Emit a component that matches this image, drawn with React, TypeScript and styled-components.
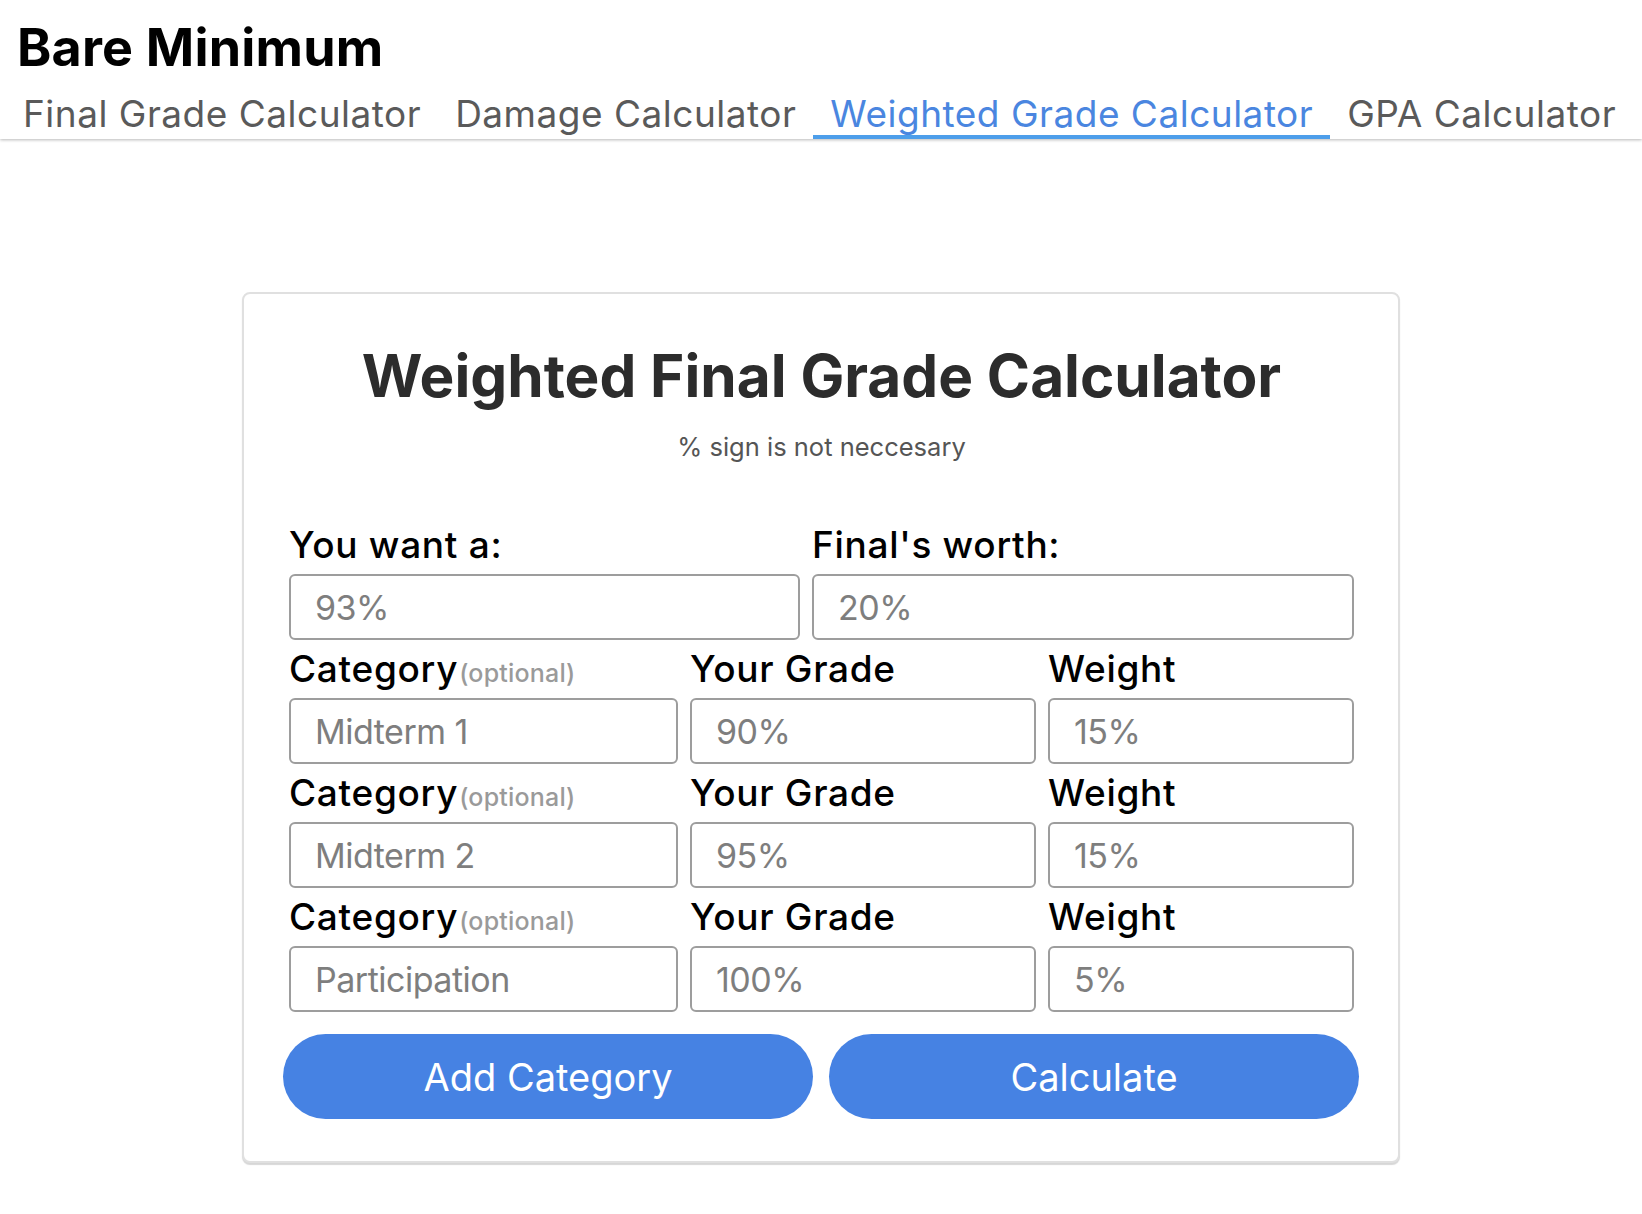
import React from "react";
import styled, { createGlobalStyle } from "styled-components";

const GlobalStyle = createGlobalStyle`
  html, body {
    margin: 0;
    padding: 0;
    background: #ffffff;
    font-family: Inter, "Noto Sans", "Liberation Sans", sans-serif;
  }
  * { box-sizing: border-box; }
`;

const Page = styled.div`
  width: 100%;
  min-height: 1214px;
  background: #fff;
`;

const Header = styled.header`
  padding-top: 17px;
  box-shadow: 0 1px 3px rgba(0, 0, 0, 0.28);
  position: relative;
  z-index: 1;
`;

const SiteTitle = styled.h1`
  margin: 0 0 15px 17px;
  font-size: 52px;
  line-height: 61px;
  font-weight: 700;
  letter-spacing: 0.2px;
  color: #000;
`;

const Tabs = styled.nav`
  display: flex;
  padding-left: 6px;
`;

const Tab = styled.a<{ $active?: boolean }>`
  display: block;
  padding: 0 17px;
  font-size: 37px;
  line-height: 42px;
  font-weight: 400;
  letter-spacing: 0.5px;
  text-decoration: none;
  color: ${(p) => (p.$active ? "#4a86e0" : "#5a5a5a")};
  border-bottom: 4px solid ${(p) => (p.$active ? "#4d9eea" : "transparent")};
  cursor: pointer;
`;

const Card = styled.main`
  width: 1158px;
  margin: 153px auto 0;
  padding: 47px 44px 42px 45px;
  border: 2px solid #e0e0e0;
  border-radius: 8px;
  box-shadow: 0 2px 1px rgba(0, 0, 0, 0.16);
  background: #fff;
`;

const CardTitle = styled.h2`
  margin: 0;
  text-align: center;
  font-size: 58.5px;
  line-height: 70px;
  font-weight: 700;
  letter-spacing: 0;
  color: #2c2c2c;
`;

const Subtitle = styled.p`
  margin: 20px 0 60px;
  text-align: center;
  font-size: 25.5px;
  line-height: 32px;
  color: #555;
`;

const Row = styled.div<{ $cols: string; $top: number }>`
  display: grid;
  grid-template-columns: ${(p) => p.$cols};
  column-gap: 12px;
  margin-top: ${(p) => p.$top}px;
`;

const Field = styled.div`
  display: flex;
  flex-direction: column;
  min-width: 0;
`;

const Label = styled.label`
  display: block;
  height: 44px;
  font-size: 37px;
  line-height: 44px;
  font-weight: 500;
  letter-spacing: 0.7px;
  color: #000;
  white-space: nowrap;
`;

const Optional = styled.span`
  margin-left: 1px;
  font-size: 25px;
  line-height: 0;
  font-weight: 500;
  letter-spacing: 0.2px;
  color: #9a9a9a;
`;

const Input = styled.input`
  display: block;
  width: 100%;
  height: 66px;
  margin-top: 7px;
  padding: 0 20px 0 24px;
  border: 2px solid #9d9d9d;
  border-radius: 6px;
  background: #fff;
  font-family: inherit;
  font-size: 34px;
  letter-spacing: -0.5px;
  color: #222;
  outline: none;
  &::placeholder {
    color: #7e7e7e;
    opacity: 1;
  }
`;

const ButtonRow = styled.div`
  display: grid;
  grid-template-columns: 1fr 1fr;
  column-gap: 16px;
  margin: 22px -5px 0 -6px;
`;

const PillButton = styled.button`
  height: 85px;
  border: none;
  border-radius: 43px;
  background: #4682e3;
  color: #fff;
  font-family: inherit;
  font-size: 38px;
  font-weight: 400;
  cursor: pointer;
`;

const tabs = [
  "Final Grade Calculator",
  "Damage Calculator",
  "Weighted Grade Calculator",
  "GPA Calculator",
];

const categories = [
  { name: "Midterm 1", grade: "90%", weight: "15%" },
  { name: "Midterm 2", grade: "95%", weight: "15%" },
  { name: "Participation", grade: "100%", weight: "5%" },
];

export default function App() {
  return (
    <Page>
      <GlobalStyle />
      <Header>
        <SiteTitle>Bare Minimum</SiteTitle>
        <Tabs>
          {tabs.map((t) => (
            <Tab key={t} $active={t === "Weighted Grade Calculator"}>
              {t}
            </Tab>
          ))}
        </Tabs>
      </Header>
      <Card>
        <CardTitle>Weighted Final Grade Calculator</CardTitle>
        <Subtitle>% sign is not neccesary</Subtitle>
        <Row $cols="511px 1fr" $top={0}>
          <Field>
            <Label>You want a:</Label>
            <Input placeholder="93%" />
          </Field>
          <Field>
            <Label>Final's worth:</Label>
            <Input placeholder="20%" />
          </Field>
        </Row>
        {categories.map((c) => (
          <Row key={c.name} $cols="389px 346px 1fr" $top={7}>
            <Field>
              <Label>
                Category<Optional>(optional)</Optional>
              </Label>
              <Input placeholder={c.name} />
            </Field>
            <Field>
              <Label>Your Grade</Label>
              <Input placeholder={c.grade} />
            </Field>
            <Field>
              <Label>Weight</Label>
              <Input placeholder={c.weight} />
            </Field>
          </Row>
        ))}
        <ButtonRow>
          <PillButton>Add Category</PillButton>
          <PillButton>Calculate</PillButton>
        </ButtonRow>
      </Card>
    </Page>
  );
}
